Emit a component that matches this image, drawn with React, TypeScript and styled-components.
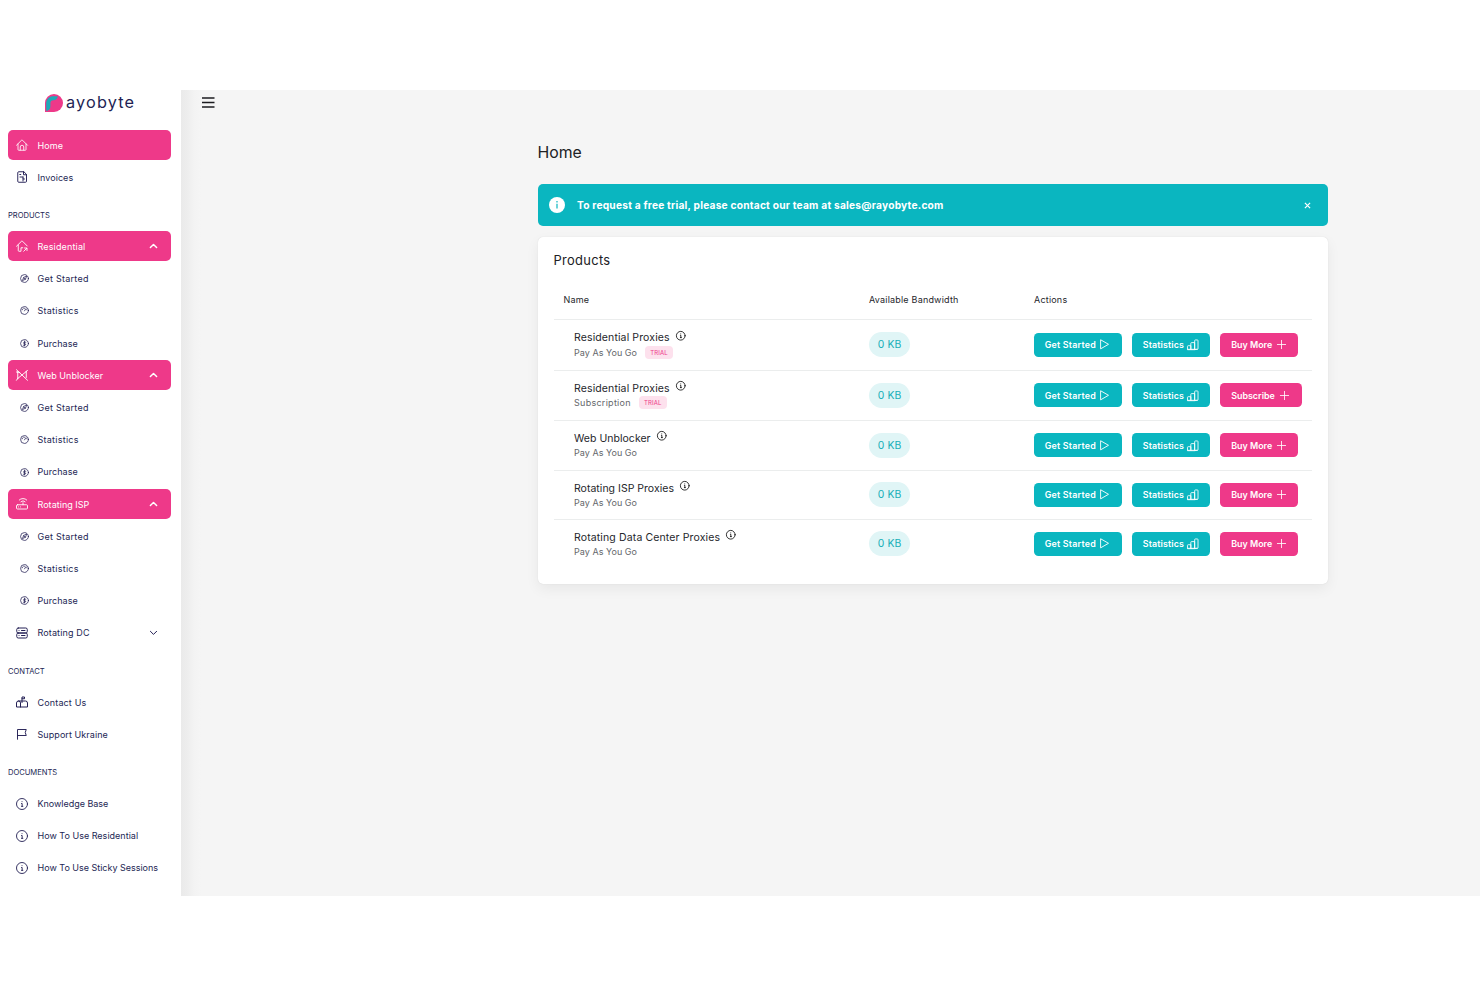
import React from "react";
import styled, { createGlobalStyle } from "styled-components";

const pink = "#ee3989";
const teal = "#0ab6c0";
const navy = "#231f54";

const GlobalStyle = createGlobalStyle`
  * { box-sizing: border-box; }
  body { margin: 0; background: #fff; font-family: Inter, "Liberation Sans", sans-serif; }
  svg { display: block; flex: none; overflow: visible; }
`;

const Page = styled.div`
  height: 987px;
  padding: 90px 0 91px;
  overflow: hidden;
`;
const Shell = styled.div`
  display: flex;
  height: 806px;
  overflow: hidden;
`;
const Sidebar = styled.aside`
  width: 181px;
  flex: none;
  padding: 0 10.5px 0 8px;
  background: #fff;
`;
const Logo = styled.div`
  display: flex;
  height: 40.1px;
  padding: 4px 0 0 37.2px;
  gap: 2.8px;
`;
const LogoText = styled.span`
  color: ${navy};
  font-size: 16.3px;
  line-height: 17px;
  letter-spacing: 1.15px;
`;
const SectionLabel = styled.h2`
  margin: 0;
  height: 36.9px;
  padding-top: 5.4px;
  display: flex;
  align-items: center;
  color: ${navy};
  font-size: 7.6px;
  font-weight: 400;
  letter-spacing: -0.03px;
`;
const NavItem = styled.a<{ $active?: boolean }>`
  display: flex;
  align-items: center;
  height: 29.5px;
  margin-bottom: 2.73px;
  padding: 0 13.7px 0 8px;
  border-radius: 5px;
  color: ${(p) => (p.$active ? "#fff" : navy)};
  background: ${(p) => (p.$active ? pink : "transparent")};
`;
const NavIcon = styled.span<{ $small?: boolean }>`
  display: flex;
  flex: none;
  width: 21.5px;
  padding: 0.6px 0 0 ${(p) => (p.$small ? "4px" : "0.3px")};
`;
const NavText = styled.span<{ $track: number }>`
  flex: 1;
  min-width: 0;
  padding-top: 1.4px;
  font-size: 9px;
  line-height: 12px;
  white-space: nowrap;
  letter-spacing: ${(p) => p.$track - 0.05}px;
`;
const Main = styled.main`
  flex: 1;
  background: linear-gradient(90deg, #eaeaea 0, #ededed 6px, #f3f3f3 13px, #f5f5f5 20px);
`;
const TopBar = styled.header`
  height: 40px;
  padding: 7.4px 0 0 20.5px;
`;
const Content = styled.section`
  width: 790.5px;
  margin-left: 356.5px;
`;
const Title = styled.h1`
  height: 54px;
  margin: 0;
  padding-top: 11.5px;
  color: #202124;
  font-size: 15.8px;
  font-weight: 400;
  line-height: 22px;
  letter-spacing: 0;
`;
const Banner = styled.div`
  display: flex;
  align-items: center;
  height: 42px;
  padding: 0 17.3px 0 11.5px;
  border-radius: 5px;
  background: ${teal};
  color: #fff;
`;
const BannerText = styled.p`
  flex: 1;
  margin: 0 0 0 12px;
  font-size: 10.2px;
  font-weight: 700;
  letter-spacing: 0.22px;
`;
const Card = styled.div`
  height: 346.5px;
  margin-top: 11px;
  padding: 0 16px;
  border-radius: 5px;
  background: #fff;
  box-shadow: 0 0 1px rgba(0, 0, 0, 0.15), 0 5px 14px rgba(0, 20, 20, 0.06);
`;
const CardTitle = styled.h2`
  height: 43px;
  margin: 0;
  padding-top: 15px;
  color: #202124;
  font-size: 12.9px;
  font-weight: 400;
  line-height: 18px;
  letter-spacing: 0.32px;
`;
const Row = styled.div<{ $h: number; $last?: boolean }>`
  display: grid;
  grid-template-columns: 315.5px 165px 1fr;
  align-items: center;
  height: ${(p) => p.$h}px;
  border-bottom: ${(p) => (p.$last ? "0" : "1px solid #ebeded")};
`;
const HeadCell = styled.span<{ $first?: boolean }>`
  padding: 1px 0 0 ${(p) => (p.$first ? "10px" : "0")};
  color: #25262b;
  font-size: 9px;
  line-height: 12px;
  letter-spacing: 0.2px;
`;
const ProductCell = styled.div`
  padding-left: 20.5px;
`;
const NameLine = styled.div`
  display: flex;
  gap: 6px;
  height: 15px;
`;
const ProductName = styled.span<{ $track: number; $raised?: boolean }>`
  color: #25262b;
  font-size: 10.5px;
  line-height: ${(p) => (p.$raised ? "14px" : "15px")};
  letter-spacing: ${(p) => p.$track - 0.06}px;
`;
const PlanLine = styled.div`
  display: flex;
  align-items: center;
  gap: 8px;
  height: 13px;
`;
const Plan = styled.span<{ $track: number }>`
  color: #65676b;
  font-size: 9px;
  line-height: 13px;
  letter-spacing: ${(p) => p.$track - 0.06}px;
`;
const Trial = styled.span`
  height: 13px;
  padding: 0 5.3px;
  border-radius: 4px;
  background: #fde1ed;
  color: ${pink};
  font-size: 6px;
  line-height: 13px;
  letter-spacing: 0.12px;
`;
const Bandwidth = styled.span`
  display: flex;
  align-items: center;
  justify-content: center;
  width: 41.3px;
  height: 25px;
  border-radius: 12.5px;
  background: #e0f5f6;
  color: #18afb8;
  font-size: 10.4px;
  letter-spacing: 0.1px;
`;
const Actions = styled.div`
  display: flex;
  gap: 10.4px;
`;
const Button = styled.button<{ $pink?: boolean; $w: number; $track: number }>`
  display: flex;
  align-items: center;
  justify-content: space-between;
  width: ${(p) => p.$w}px;
  height: 24px;
  padding: 0 ${(p) => (p.$pink ? "12.5px" : "11.4px")} 0 10.7px;
  border: 0;
  border-radius: 4.5px;
  background: ${(p) => (p.$pink ? pink : teal)};
  color: #fff;
  font: 600 8.9px Inter, sans-serif;
  letter-spacing: ${(p) => p.$track}px;
  white-space: nowrap;
`;

const Svg = ({ size = 12, sw = 1.5, children }: { size?: number; sw?: number; children: React.ReactNode }) => (
  <svg width={size} height={size} viewBox="0 0 24 24" fill="none" stroke="currentColor" strokeWidth={sw} strokeLinecap="round" strokeLinejoin="round">
    {children}
  </svg>
);

const HomeShape = () => (
  <Svg sw={1.7}>
    <path d="M1 12.5 11 2.5a1.5 1.5 0 0 1 2 0L23 12.5M4 10v11a1.5 1.5 0 0 0 1.500 1.500h13A1.500 1.500 0 0 0 20 21V10M8.500 22v-6a3.500 3.500 0 0 1 7 0v6" />
  </Svg>
);
const InvoiceShape = () => (
  <Svg sw={1.9}>
    <path d="M15 1.500H5.500a2 2 0 0 0-2 2v17a2 2 0 0 0 2 2h13.500a2 2 0 0 0 2-2V7.500zM15 1.500v6h6M7.500 7h2M8 12h6M14 12v4h3M14 16v4" />
  </Svg>
);
const ResidentialShape = () => (
  <Svg sw={1.8}>
    <path d="M1 12.500 11 2.500a1.500 1.500 0 0 1 2 0L22.500 12M4.500 10v11a1.500 1.500 0 0 0 1.500 1.500h4V15.500h3.500M15.500 22.500l6-6M17 16h5v5" />
  </Svg>
);
const UnblockShape = () => (
  <Svg sw={1.9}>
    <path d="M1 1.500 23 22.500M3.500 6v13M20.500 5v12M3.500 19l17-14M3.500 6l4 1M1 22.500l2.500-3.500M1 6h2.500M20.500 5l2.500-2.500" />
  </Svg>
);
const RouterShape = () => (
  <Svg sw={1.8}>
    <path d="M3 13.500h18a2 2 0 0 1 2 2V20a2 2 0 0 1-2 2H3a2 2 0 0 1-2-2v-4.500a2 2 0 0 1 2-2zM14 13.500V9.500M5 17.800h.1M9 17.800h.1M6.500 4a10.500 10.500 0 0 1 15 0M9.800 7.500a6 6 0 0 1 8.400 0" />
  </Svg>
);
const ServerShape = () => (
  <Svg sw={2}>
    <rect x="1.500" y="2" width="21" height="10" rx="3" />
    <rect x="1.500" y="12" width="21" height="10" rx="3" />
    <path d="M6 7h.1M6 17h.1M11 7h7M11 17h7" />
  </Svg>
);
const MailboxShape = () => (
  <Svg sw={2}>
    <path d="M5 10h14a4 4 0 0 1 4 4v8H1v-8a4 4 0 0 1 8 0v8M12 13V2h5v3.500h-5" />
  </Svg>
);
const FlagShape = () => (
  <Svg sw={1.900}>
    <path d="M3 22.500V3h17.500l-2 6 2 6H3" />
  </Svg>
);
const InfoShape = ({ size = 12, sw = 1.8 }: { size?: number; sw?: number }) => (
  <Svg size={size} sw={sw}>
    <circle cx="12" cy="12" r="11" />
    <path d="M11 11H12.300v5.500M11 16.700h2.700M12 7.200h.1" />
  </Svg>
);
const CompassShape = () => (
  <Svg size={9} sw={2}>
    <circle cx="12" cy="12" r="10.500" />
    <path d="M17.500 6.500 14.500 14 6.500 17.500 9.500 10zM9.500 10l5 4" />
  </Svg>
);
const GaugeShape = () => (
  <Svg size={9} sw={2}>
    <circle cx="12" cy="12" r="10.500" />
    <path d="M5.500 10.500a6.500 6.500 0 0 1 3-4M18.500 10.500a6 6 0 0 0-1-2M12 13 15.500 7.500M11 6h1" />
  </Svg>
);
const DollarShape = () => (
  <Svg size={9} sw={2}>
    <circle cx="12" cy="12" r="10.500" />
    <path d="M15.500 8.500h-4a2 2 0 0 0 0 4h1.500a2 2 0 0 1 0 4H8.800M12 5.500v13" />
  </Svg>
);
const Chevron = ({ down }: { down?: boolean }) => (
  <svg width="7" height="4" viewBox="0 0 7 4" fill="none" stroke="currentColor" strokeWidth={down ? 1 : 1.5} strokeLinecap="round" strokeLinejoin="round">
    <path d={down ? "M.4 .3 3.500 3.400 6.600 .3" : "M.4 3.500 3.500 .5 6.600 3.500"} />
  </svg>
);
const PlayShape = () => (
  <Svg size={11} sw={2}>
    <path d="M3.500 2.500v19L20 12z" />
  </Svg>
);
const BarsShape = () => (
  <Svg size={11.5} sw={1.8}>
    <path d="M1 21.500v-6a1.500 1.500 0 0 1 1.500-1.500H8V21.500zM8 21.500V9a1.500 1.500 0 0 1 1.500-1.500H16v14zM16 21.500V3.500a1.500 1.500 0 0 1 1.500-1.500H21.500A1.500 1.500 0 0 1 23 3.500v16.500a1.500 1.500 0 0 1-1.500 1.500zM1.500 21.500h20" />
  </Svg>
);
const PlusShape = () => (
  <Svg size={9} sw={2.2}>
    <path d="M12 1v22M1 12h22" />
  </Svg>
);

type Entry = { icon: React.ReactNode; text: string; track: number; active?: boolean; small?: boolean; chevron?: "up" | "down" };

const steps: Entry[] = [
  { icon: <CompassShape />, text: "Get Started", track: 0.3, small: true },
  { icon: <GaugeShape />, text: "Statistics", track: 0.3, small: true },
  { icon: <DollarShape />, text: "Purchase", track: 0.1, small: true },
];

const sections: { label?: string; items: Entry[] }[] = [
  {
    items: [
      { icon: <HomeShape />, text: "Home", track: 0.15, active: true },
      { icon: <InvoiceShape />, text: "Invoices", track: 0.12 },
    ],
  },
  {
    label: "PRODUCTS",
    items: [
      { icon: <ResidentialShape />, text: "Residential", track: 0.2, active: true, chevron: "up" },
      ...steps,
      { icon: <UnblockShape />, text: "Web Unblocker", track: 0.08, active: true, chevron: "up" },
      ...steps,
      { icon: <RouterShape />, text: "Rotating ISP", track: 0.08, active: true, chevron: "up" },
      ...steps,
      { icon: <ServerShape />, text: "Rotating DC", track: 0.18, chevron: "down" },
    ],
  },
  {
    label: "CONTACT",
    items: [
      { icon: <MailboxShape />, text: "Contact Us", track: 0.2 },
      { icon: <FlagShape />, text: "Support Ukraine", track: 0.12 },
    ],
  },
  {
    label: "DOCUMENTS",
    items: [
      { icon: <InfoShape />, text: "Knowledge Base", track: 0.02 },
      { icon: <InfoShape />, text: "How To Use Residential", track: 0.06 },
      { icon: <InfoShape />, text: "How To Use Sticky Sessions", track: 0.04 },
    ],
  },
];

const products = [
  { name: "Residential Proxies", track: 0.18, plan: "Pay As You Go", planTrack: 0.1, trial: true, raised: true, h: 50.5 },
  { name: "Residential Proxies", track: 0.18, plan: "Subscription", planTrack: 0.33, trial: true, subscribe: true, h: 50.5 },
  { name: "Web Unblocker", track: 0.09, plan: "Pay As You Go", planTrack: 0.1, h: 49.5 },
  { name: "Rotating ISP Proxies", track: 0.08, plan: "Pay As You Go", planTrack: 0.1, h: 49.5 },
  { name: "Rotating Data Center Proxies", track: 0.19, plan: "Pay As You Go", planTrack: 0.1, h: 47.5 },
];

export default function App() {
  return (
    <Page>
      <GlobalStyle />
      <Shell>
        <Sidebar>
          <Logo>
            <svg width="18" height="18" viewBox="0 0 18 18">
              <path d="M0 18V9a9 9 0 1 1 9 9z" fill={pink} />
              <path d="M1.200 17V9.500C1.200 4.800 4 2.200 8.500 2.200h4.300c-.4 2.800-2 4-4.400 4C6.200 6.200 5.400 7.300 5.400 9.300v3.200c0 2.600-1.600 4.200-4.200 4.500z" fill="#1fa9b8" />
            </svg>
            <LogoText>ayobyte</LogoText>
          </Logo>
          {sections.map((section, i) => (
            <nav key={i}>
              {section.label && <SectionLabel>{section.label}</SectionLabel>}
              {section.items.map((item, j) => (
                <NavItem key={j} $active={item.active}>
                  <NavIcon $small={item.small}>{item.icon}</NavIcon>
                  <NavText $track={item.track}>{item.text}</NavText>
                  {item.chevron && <Chevron down={item.chevron === "down"} />}
                </NavItem>
              ))}
            </nav>
          ))}
        </Sidebar>
        <Main>
          <TopBar>
            <svg width="13" height="11" viewBox="0 0 13 11" stroke="#1c1c20" strokeWidth="1.500">
              <path d="M0 1h12.500M0 5.500h12.500M0 10h12.500" />
            </svg>
          </TopBar>
          <Content>
            <Title>Home</Title>
            <Banner>
              <svg width="16" height="16" viewBox="0 0 16 16">
                <circle cx="8" cy="8" r="8" fill="#fff" />
                <path d="M8 6.800v4.700M8 4v1.400" stroke={teal} strokeWidth="1.200" />
              </svg>
              <BannerText>To request a free trial, please contact our team at sales@rayobyte.com</BannerText>
              <svg width="7" height="7" viewBox="0 0 7 7" stroke="#fff" strokeWidth="1.200">
                <path d="M.9.9l5.200 5.200M6.100.9.900 6.100" />
              </svg>
            </Banner>
            <Card>
              <CardTitle>Products</CardTitle>
              <Row $h={40}>
                <HeadCell $first>Name</HeadCell>
                <HeadCell>Available Bandwidth</HeadCell>
                <HeadCell>Actions</HeadCell>
              </Row>
              {products.map((p, i) => (
                <Row key={i} $h={p.h} $last={i === products.length - 1}>
                  <ProductCell>
                    <NameLine>
                      <ProductName $track={p.track} $raised={p.raised}>{p.name}</ProductName>
                      <InfoShape size={9.5} sw={2} />
                    </NameLine>
                    <PlanLine>
                      <Plan $track={p.planTrack}>{p.plan}</Plan>
                      {p.trial && <Trial>TRIAL</Trial>}
                    </PlanLine>
                  </ProductCell>
                  <Bandwidth>0 KB</Bandwidth>
                  <Actions>
                    <Button $w={87.7} $track={0.22}>Get Started<PlayShape /></Button>
                    <Button $w={78} $track={0.14}>Statistics<BarsShape /></Button>
                    <Button $pink $w={p.subscribe ? 81.2 : 78} $track={0.02}>
                      {p.subscribe ? "Subscribe" : "Buy More"}
                      <PlusShape />
                    </Button>
                  </Actions>
                </Row>
              ))}
            </Card>
          </Content>
        </Main>
      </Shell>
    </Page>
  );
}
